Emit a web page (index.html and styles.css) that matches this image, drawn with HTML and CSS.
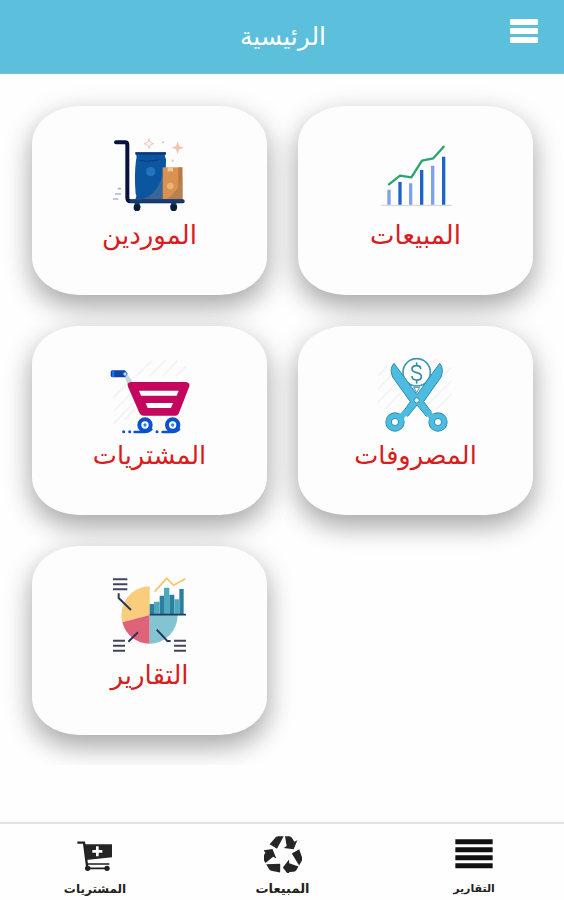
FILE: index.html
```html
<!DOCTYPE html>
<html lang="ar">

<head>
  <meta charset="UTF-8" />
  <meta name="viewport" content="width=device-width, initial-scale=1.0" />
  <title>الرئيسية</title>
  <link rel="stylesheet" href="styles.css">
</head>

<body>
  <!-- header -->
  <header class="header">
    <h1>الرئيسية</h1>
    <button class="menu" aria-label="menu"><i></i><i></i><i></i></button>
  </header>

  <!-- main cards -->
  <main class="cards">
    <a class="card">
      <svg viewBox="36 36 228 228">
        <path d="M106 82h92c-5 9-4 15 0 20l-2 121h-90c2-8 5-9 1-16-3-35-3-70 1-101 3-8 2-15-2-24z" fill="#0c559f" />
        <path d="M106 82h92v7h-92z" fill="#083a78" />
        <path d="M118 106l24 3 34-4" fill="none" stroke="#083a78" stroke-width="3" />
        <path d="M124 223q48-15 64-74v74z" fill="#38669a" />
        <circle cx="152" cy="140" r="14" fill="#2374bd" />
        <path d="M188 127h59v96h-59z" fill="#d99250" />
        <path d="M235 127h12v96h-12z" fill="#b87946" />
        <path d="M197 223q36-19 50-66v66z" fill="#b98051" />
        <path d="M203 127h16v14l-8-4-8 4z" fill="#f1c7a0" />
        <circle cx="211" cy="183" r="10" fill="#edb27c" />
        <path d="M48 52h27q7 0 7 7v160q0 10 10 10h156" fill="none" stroke="#07123f" stroke-width="12" stroke-linecap="round" />
        <path d="M92 229h156" stroke="#123e73" stroke-width="8" stroke-linecap="round" />
        <path d="M105 233h13l4 14h-21zM214 233h14l4 14h-22z" fill="#163f63" />
        <circle cx="111" cy="248" r="10" fill="#0b1c38" />
        <circle cx="221" cy="248" r="10" fill="#0b1c38" />
        <path d="M147 41l3 11 11 4-11 4-3 11-4-11-11-4 11-4z" fill="none" stroke="#efc8b8" stroke-width="3" />
        <path d="M233 49l5 14 14 5-14 5-5 14-5-14-13-5 13-5z" fill="#f3c4b3" />
        <path d="M186 52h6M215 107h6" stroke="#c9cbd2" stroke-width="5" />
        <path d="M53 191h10M45 207h18M39 222h16" stroke="#a6b8cc" stroke-width="5" />
      </svg>
      <span>الموردين</span>
    </a>
    <a class="card">
      <svg viewBox="52 36 228 228">
        <path d="M62 241h211" stroke="#cfd0d6" stroke-width="3" />
        <path d="M85 194v45M150 175v64M216 122v117" stroke="#7ba4eb" stroke-width="10" />
        <path d="M118 171v68M183 135v104M249 95v144" stroke="#1d64c8" stroke-width="10" />
        <path d="M85 178l33-26 34 5 32-50 34-7 31-35" fill="none" stroke="#27a66f" stroke-width="7" stroke-linecap="round" stroke-linejoin="round" />
      </svg>
      <span>المبيعات</span>
    </a>
    <a class="card">
      <svg viewBox="94 36 228 228">
        <path class="hatch" d="M98 158l45-45M100 198l48-50M98 238l65-70M133 224l30-34M165 95l50-50M205 95l50-50M245 95l46-48M285 95l30-30" />
        <path d="M127 85q10-4 15 5l15 22-17 5z" fill="#c6d9d9" />
        <path d="M95 76h38l8 10-8 11H95q-5 0-5-6v-10q0-5 5-5z" fill="#0c43ad" />
        <path d="M94 78h7v18h-7z" fill="#1674e6" />
        <circle cx="133" cy="87" r="5" fill="#bed8ef" />
        <path d="M151 111h166q12 3 9 13l-31 80q-3 8-10 8h-96q-9 0-13-9l-34-78q-5-12 9-14z" fill="#c4065f" />
        <path d="M175 137h119l-6 15H181zM195 174h82l-6 15h-70z" fill="#fff" />
        <circle cx="193" cy="240" r="17" fill="#fff" stroke="#0b51d0" stroke-width="12" />
        <circle cx="276" cy="240" r="17" fill="#fff" stroke="#0b51d0" stroke-width="12" />
        <circle cx="193" cy="240" r="5" fill="#2684ed" />
        <circle cx="276" cy="240" r="5" fill="#2684ed" />
        <path d="M162 261h30q12 0 20-8M246 261h29q12 0 20-8" fill="none" stroke="#0b51d0" stroke-width="8" stroke-linecap="round" />
        <path d="M129 260h.1M147 260h.1M229 260h.1" stroke="#0b51d0" stroke-width="9" stroke-linecap="round" />
      </svg>
      <span class="purchases">المشتريات</span>
    </a>
    <a class="card">
      <svg viewBox="112 36 228 228">
        <path class="hatch" d="M112 93l28-30M112 133l40-43M112 173l60-64M135 190l50-52M270 130l62-63M260 180l72-72M285 195l48-48M270 60l20-20" />
        <circle cx="228" cy="82" r="41" fill="#fff" stroke="#3d98b9" stroke-width="5" />
        <path d="M160 55q-15 16-4 41l53 74-22 31 14 13 28-34 28 34 15-13-23-31 52-74q10-25-4-41l-68 94z" fill="#4cbde0" stroke="#318aa9" stroke-width="3" stroke-linejoin="round" />
        <path d="M219 127h18l-9 16z" fill="#fff" stroke="#3d98b9" stroke-width="3" />
        <circle cx="163" cy="231" r="19" fill="#fff" stroke="#318aa9" stroke-width="20" />
        <circle cx="163" cy="231" r="19" fill="none" stroke="#4cbde0" stroke-width="15" />
        <circle cx="292" cy="231" r="19" fill="#fff" stroke="#318aa9" stroke-width="20" />
        <circle cx="292" cy="231" r="19" fill="none" stroke="#4cbde0" stroke-width="15" />
        <path d="M181 216l17-18M274 216l-17-18" stroke="#4cbde0" stroke-width="18" />
        <circle cx="228" cy="166" r="8" fill="#d9f1f7" stroke="#318aa9" stroke-width="3" />
        <path d="M240 70q-1-8-12-8-14 0-14 10 0 8 14 11t14 12q0 10-14 10-13 0-14-10M228 54v8M228 105v9" fill="none" stroke="#3788a7" stroke-width="5" stroke-linecap="round" />
      </svg>
      <span class="expenses">المصروفات</span>
    </a>
    <a class="card">
      <svg viewBox="36 36 228 228">
        <path d="M149 150V64A84 86 0 0 0 67 172z" fill="#f9cd7c" />
        <path d="M149 150L67 172a84 86 0 0 0 82 64z" fill="#de6378" />
        <path d="M149 150v86a84 86 0 0 0 84-86z" fill="#82c4d2" />
        <path d="M149 117h13v31h-13zM179 92h13v56h-13zM208 89h15v59h-15zM238 72h13v76h-13z" fill="#2c7f9e" />
        <path d="M162 110h17v38h-17zM192 68h16v80h-16zM223 103h15v45h-15z" fill="#4da9bd" />
        <path d="M149 149h109" stroke="#263a60" stroke-width="5" />
        <path d="M164 80l36-40 21 21 35-20" fill="none" stroke="#f4c66c" stroke-width="5" />
        <path d="M39 43h43M39 58h43M39 73h43M39 227h36M39 242h36M39 257h36M222 227h36M222 242h36M222 257h36" stroke="#44435f" stroke-width="6" />
        <path d="M56 85v14l37 36M114 202l-29 28M170 194l32 34h10" fill="none" stroke="#303459" stroke-width="6" />
      </svg>
      <span>التقارير</span>
    </a>
  </main>

  <!-- bottom bar -->
  <nav class="tabbar">
    <a class="tab">
      <svg viewBox="108 60 114 114">
        <path d="M112 83h20l10 76" fill="none" stroke="#202020" stroke-width="7" />
        <path d="M134 88h82v39l-77 8z" fill="#252525" />
        <path d="M143 147h65M137 160h70" stroke="#202020" stroke-width="5" />
        <circle cx="143" cy="160" r="8" fill="#202020" />
        <circle cx="201" cy="160" r="8" fill="#202020" />
        <path d="M172 94v30M157 109h30" stroke="#fff" stroke-width="8" />
      </svg>
      <span>المشتريات</span>
    </a>
    <a class="tab">
      <svg viewBox="672 60 114 114">
        <g fill="#252525">
          <path id="arm" d="M707 67q3-3 8-3h16l-20 37-22-13zM735 64h12q6 0 9 5l7 11 9-4-11 27-30-4 9-6z" />
          <use href="#arm" transform="rotate(120 729 121)" />
          <use href="#arm" transform="rotate(240 729 121)" />
        </g>
      </svg>
      <span>المبيعات</span>
    </a>
    <a class="tab">
      <svg viewBox="165 60 114 114">
        <path d="M166 80h112M166 104h112M166 128h112M166 152h112" stroke="#111" stroke-width="15" />
      </svg>
      <span class="reports">التقارير</span>
    </a>
  </nav>
</body>

</html>
```

FILE: styles.css
```css
* {
  margin: 0;
  padding: 0;
  box-sizing: border-box;
}

body {
  display: flex;
  flex-direction: column;
  height: 900px;
  background: #fefefe;
  font-family: "DejaVu Sans", sans-serif;
  overflow: hidden;
}

.header {
  display: grid;
  grid-template-columns: 1fr auto 1fr;
  height: 74px;
  padding: 0 26px 0 28px;
  background: #5cbfdc;
  border-bottom: 1px solid #78bdd0;
}

.header h1 {
  grid-column: 2;
  align-self: center;
  color: #fff;
  font-size: 25px;
  font-weight: normal;
}

.menu {
  justify-self: end;
  display: flex;
  flex-direction: column;
  gap: 3px;
  width: 28px;
  margin-top: 19px;
  border: none;
  background: transparent;
}

.menu i {
  width: 28px;
  height: 6px;
  border-radius: 1px;
  background: #fff;
}

.cards {
  display: grid;
  grid-template-columns: 235px 235px;
  grid-auto-rows: 189px;
  gap: 31px;
  padding: 32px 0 30px 32px;
  overflow: hidden;
}

.card {
  display: flex;
  flex-direction: column;
  align-items: center;
  padding-top: 31px;
  border-radius: 20%;
  background: #fdfdfd;
  box-shadow: 0 12px 25px rgba(0, 0, 0, 0.2), 0 9px 31px rgba(0, 0, 0, 0.19);
}

.card svg {
  flex: none;
  width: 76px;
  height: 76px;
  overflow: visible;
}

.card .hatch {
  fill: none;
  stroke: #f3f3f3;
  stroke-width: 5;
}

.card span {
  height: 36px;
  line-height: 36px;
  margin-top: 4px;
  color: #d91c20;
  font-size: 26px;
  white-space: nowrap;
}

.card .purchases,
.card .expenses {
  font-size: 25.6px;
}

.tabbar {
  display: grid;
  grid-template-columns: 190px 187px 1fr;
  height: 78px;
  margin-top: auto;
  border-top: 2px solid #e2e2e2;
}

.tab {
  display: flex;
  flex-direction: column;
  align-items: center;
  padding-top: 11px;
  color: #222;
}

.tab:nth-child(2) {
  padding-right: 2px;
}

.tab:last-child {
  padding-left: 7px;
}

.tab svg {
  width: 38px;
  height: 38px;
}

.tab span {
  margin-top: 8px;
  font-size: 12px;
  font-weight: bold;
  line-height: 16px;
  white-space: nowrap;
}

.tab:nth-child(2) span {
  font-size: 13px;
}

.tab .reports {
  font-size: 11px;
}
```
